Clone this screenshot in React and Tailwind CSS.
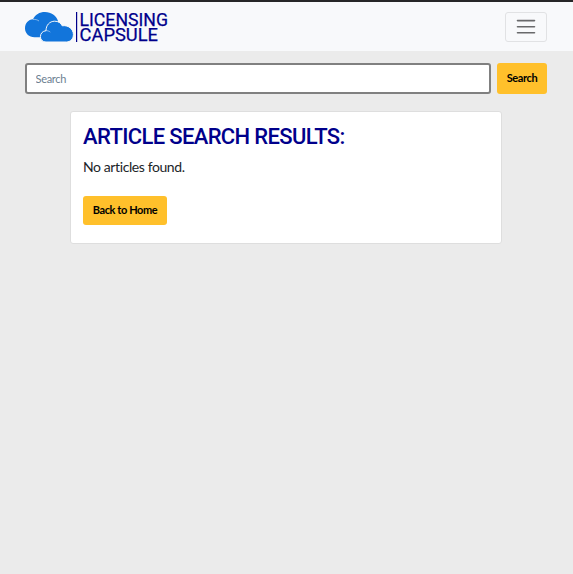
function Logo() {
  return (
    <svg width="146" height="32" viewBox="0 0 146 32" className="block overflow-visible" role="img" aria-label="Licensing Capsule">
      <g fill="#1275db">
        <path d="M9.500 26.200C4 26.200 0 22.500 0 17.300c0-4.900 3.300-8.700 8-9C10 3.600 14.500 1 20 1c6.200 0 11.300 3.600 13 9L30 20l-11 6.200Z" />
        <path d="M8 8.500c2.300-.3 4.300.2 6 1.500" fill="none" stroke="#f8f9fa" strokeWidth="0.500" />
        <path
          d="M21 31c-3.200 0-5.600-2.200-5.600-5.300 0-3.200 2.200-5.700 5.600-6 0-5.400 3.500-9.500 8.700-9.500 3.500 0 6.200 1.700 7.500 4.600 6-1 11.200 3.200 11.200 8.800 0 4.300-3 7.400-7 7.400Z"
          stroke="#f8f9fa"
          strokeWidth="1"
        />
        <path d="M20.500 19.700c1.900-.2 3.500.3 4.800 1.400" fill="none" stroke="#f8f9fa" strokeWidth="0.500" />
      </g>
      <rect x="51" y="1" width="1.200" height="30" fill="#00008b" />
      <g fill="#00008b" stroke="#00008b" strokeWidth="0.250" fontFamily="Roboto, sans-serif" fontSize="18.500">
        <text x="54.500" y="15" textLength="88.500" lengthAdjust="spacingAndGlyphs">LICENSING</text>
        <text x="54.500" y="30" textLength="78.500" lengthAdjust="spacingAndGlyphs">CAPSULE</text>
      </g>
    </svg>
  );
}

function Navbar() {
  return (
    <header className="flex h-[51px] items-start justify-between border-t-2 border-[#262628] bg-[#f8f9fb] pl-[25px] pr-[26px]">
      <a href="#" className="mt-[9px]">
        <Logo />
      </a>
      <button aria-label="Menu" className="mt-[10px] flex h-[30px] w-[42px] items-center justify-center rounded-[3px] border border-[#e1e2e4]">
        <svg width="20" height="16" viewBox="0 0 20 16" stroke="#68696b" strokeWidth="1.600" strokeLinecap="round">
          <path d="M1.500 1.600h17M1.500 7.700h17M1.500 13.800h17" />
        </svg>
      </button>
    </header>
  );
}

export default function App() {
  return (
    <div className="min-h-screen bg-[#ebebeb] font-['Lato',sans-serif] text-[#212529] [font-variant-ligatures:none]">
      <Navbar />
      <form className="flex gap-[6px] pl-[25px] pr-[26px] pt-[12px]">
        <input
          type="text"
          placeholder="Search"
          className="h-[31px] min-w-0 flex-1 rounded-[3px] border-2 border-[#808080] bg-white px-[8.500px] text-[11px] tracking-[-0.3px] placeholder:text-[#6c8090]"
        />
        <button type="button" className="h-[31px] w-[50px] rounded-[3px] bg-[#ffc02b] text-[11px] font-bold tracking-[-0.4px] text-black">
          Search
        </button>
      </form>
      <main className="ml-[70px] mt-[17px] h-[133px] w-[432px] rounded-[3px] border border-[#dedede] bg-white px-[12px] pt-[10px]">
        <h1 className="whitespace-nowrap font-['Roboto',sans-serif] text-[22px] font-medium leading-[30px] tracking-[-0.65px] text-[#00008b]">
          ARTICLE SEARCH RESULTS:
        </h1>
        <p className="mt-[4px] text-[14px] leading-[21px] tracking-[-0.4px]">No articles found.</p>
        <button type="button" className="mt-[19px] block h-[29px] w-[84px] whitespace-nowrap rounded-[3px] bg-[#ffc02b] text-[11px] font-bold tracking-[-0.400px] text-black">
          Back to Home
        </button>
      </main>
    </div>
  );
}
